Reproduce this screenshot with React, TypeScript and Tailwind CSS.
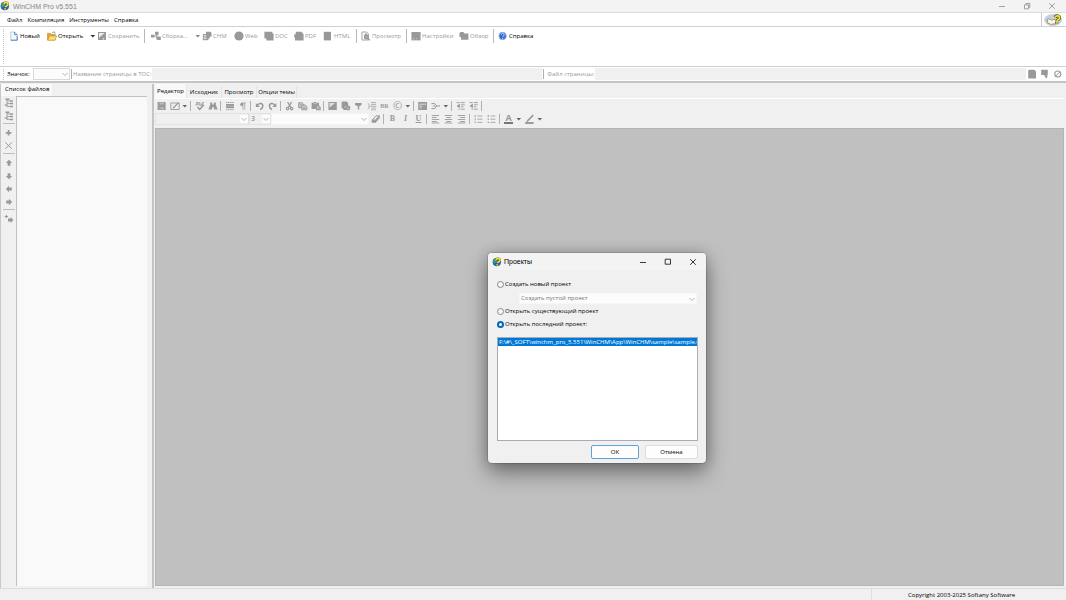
import { useState } from "react";
import type { ReactNode } from "react";
import clsx from "clsx";

type IconProps = { className?: string };

function Svg({ children, className }: { children: ReactNode; className?: string }) {
  return (
    <svg viewBox="0 0 10 10" className={clsx("size-[10px] shrink-0", className)} fill="none" stroke="currentColor" aria-hidden="true">
      {children}
    </svg>
  );
}

const glyphs: Record<string, ReactNode> = {
  save: (
    <g stroke="none">
      <path d="M.6 1h8v8h-8z" fill="currentColor" />
      <path d="M2.6 1.5h4.500v2H2.6zM2.6 6h4v2.400h-4z" fill="#bbb" />
      <path d="M3.400 6.400h1v1.800h-1z" fill="currentColor" />
    </g>
  ),
  saveDiag: (
    <g stroke="none">
      <path d="M1 1h8v8H1z" fill="currentColor" />
      <path d="M2 2h5.600L2 6.800z" fill="#eee" />
      <path d="M5.800 7h1.400v1.600H5.800z" fill="#ddd" />
    </g>
  ),
  edit: (
    <>
      <path d="M.8 2h8.400v6.500H.8z" strokeWidth=".9" />
      <path d="M3 7.300 8.500 1.600" strokeWidth="1.300" />
    </>
  ),
  spell: (
    <>
      <path d="M1 1.500h2.200v3M1 4.500V3h2M4.800 1v3.400h1.600V2.400M9 1.500H7.700v2.800H9" strokeWidth=".9" />
      <path d="M2.500 6 4.700 8.300 8.800 4" strokeWidth="1.500" />
    </>
  ),
  find: (
    <path d="M2.200 1.600h2v2h1.600v-2h2v2l1.800 5H5.900V6.200H4.100v2.400H.4l1.800-5z" fill="currentColor" stroke="none" />
  ),
  pagebreak: (
    <>
      <path d="M1 1.500h8M1 8.700h8" strokeWidth="1" strokeDasharray="1.400 .7" />
      <path d="M1 3h8v4.200H1z" fill="currentColor" stroke="none" />
      <path d="M1 5.100h8" stroke="#ccc" strokeWidth=".6" />
    </>
  ),
  pilcrow: (
    <>
      <path d="M5 2v6.800M6.800 2v6.800M8 2H4" strokeWidth=".7" />
      <path d="M5 1.800H3.800a1.600 1.600 0 0 0 0 3.200H5z" fill="currentColor" stroke="none" />
    </>
  ),
  undo: (
    <>
      <path d="M2.600 4.200C4.600 1.200 8 2.500 7.800 5.200 7.600 7 6.400 8 5.200 8.600" strokeWidth="1.500" />
      <path d="M.9 2v4h4z" fill="currentColor" stroke="none" />
    </>
  ),
  redo: (
    <>
      <path d="M6.600 4.200C4.600 1.200 1.200 2.500 1.400 5.200 1.600 7 2.800 8 4 8.600" strokeWidth="1.500" />
      <path d="M8.300 2v4h-4z" fill="currentColor" stroke="none" />
    </>
  ),
  cut: (
    <>
      <path d="M2.600 1 5.800 6.400M6.600 1 3.400 6.400" strokeWidth="1.300" />
      <circle cx="2.600" cy="7.600" r="1.200" strokeWidth="1.200" />
      <circle cx="6.600" cy="7.600" r="1.200" strokeWidth="1.200" />
    </>
  ),
  copy: (
    <>
      <path d="M.6 1.800h3.500l1.500 1.400v3.600h-5z" fill="#ccc" strokeWidth=".9" />
      <path d="M3.800 4h3.400l1.700 1.600v3.200H3.800z" fill="#ccc" strokeWidth=".9" />
      <path d="M1.600 3.600h2M1.600 5h1.600M4.800 6.200h2.600M4.800 7.500h3" strokeWidth=".6" />
    </>
  ),
  paste: (
    <g stroke="none" fill="currentColor">
      <path d="M.6 1.800h2L3 1h2l.4.800H8V8H.6z" />
      <path d="M5 4.400h3L9.700 6v3.200H5z" />
      <path d="M5.600 5.400h2M5.600 6.600h3M5.600 7.800h3" stroke="#e4e4e4" strokeWidth=".5" />
      <path d="M2.600 2.600h3" stroke="#e4e4e4" strokeWidth=".6" />
    </g>
  ),
  picture: (
    <g stroke="none">
      <path d="M.4 1h8.400v8H.4z" fill="currentColor" />
      <path d="M1.500 2h5.600L1.500 6.600z" fill="#ddd" />
    </g>
  ),
  pictureLink: (
    <g stroke="none" fill="currentColor">
      <path d="M.6.6h5l1.500 1.400v5H.6z" />
      <circle cx="4.200" cy="6.200" r="2.800" />
      <circle cx="7" cy="7" r="2.400" />
      <path d="M3 6h3M6.200 7.400h2" stroke="#ddd" strokeWidth=".6" />
    </g>
  ),
  filter: <path d="M1 2h6.600v2L5.200 5.200v3.200H3.800V5.200L1 4z" fill="currentColor" stroke="none" />,
  hr: (
    <>
      <path d="M4 1.600h5M4 3.400h5M1 5.200h8.400M4 7h5M4 8.800h5" strokeWidth=".7" />
      <path d="M.8 2.400 2.500 4M.8 8 2.500 6.400" strokeWidth=".9" />
    </>
  ),
  form: (
    <g stroke="none">
      <path d="M.2 1H9v8H.2z" fill="currentColor" />
      <path d="M1.200 3.200H8M1.400 5.200h3M1.400 7h2" stroke="#e8e8e8" strokeWidth=".8" />
    </g>
  ),
  split: (
    <>
      <path d="M.4 2.600h3.400M.4 7.600h3.400M4.800 5H9" strokeWidth="1" />
      <path d="M1.800 5h2.400M3.800 2.600 5.400 5 3.800 7.600" strokeWidth=".9" />
    </>
  ),
  outdent: (
    <>
      <path d="M.6 1.600h3M4.800 1.600h4M4.800 3.800h4M4.800 5.800h2.600M4.800 8.200h4" strokeWidth=".9" />
      <path d="M3.800 2.600v4.600L.6 4.900z" fill="currentColor" stroke="none" />
      <path d="M2.400 8.200H4" strokeWidth=".9" />
    </>
  ),
  erase: (
    <>
      <path d="M1 6.200 5 1.800h3.400L4.600 6.200z" fill="#e8e8e8" strokeWidth=".9" />
      <path d="M1 6.200h3.600l3.800-4.400V4L4.600 8.400H1z" fill="currentColor" strokeWidth=".6" />
    </>
  ),
  alignLeft: <path d="M.8 1.500h7.400M.8 3.500h5M.8 5.500h7.400M.8 7.500h5M.8 9h7.400" strokeWidth=".9" />,
  alignCenter: <path d="M.8 1.500h7.400M2.200 3.500h4.600M.8 5.500h7.400M2.200 7.500h4.600M.8 9h7.400" strokeWidth=".9" />,
  alignRight: <path d="M.8 1.500h7.400M3.200 3.500h5M.8 5.500h7.400M3.200 7.500h5M.8 9h7.400" strokeWidth=".9" />,
  numbers: (
    <>
      <path d="M1.200 1v2.400M1.200 4.400v1.800M1.200 7.200v2" strokeWidth=".9" />
      <path d="M3.400 2h5M3.400 5.200h5M3.400 8.400h5" strokeWidth=".8" />
    </>
  ),
  bullets: (
    <>
      <path d="M.6 2H2M.6 5.200H2M.6 8.400H2" strokeWidth="1.300" />
      <path d="M3.400 2h5M3.400 5.200h5M3.400 8.400h5" strokeWidth=".8" />
    </>
  ),
  marker: (
    <>
      <path d="M.2 9h8.400" stroke="#777" strokeWidth="1.400" />
      <path d="M2.400 7 8.200 1.200" strokeWidth="1.700" />
      <path d="M1.400 7.600 3.200 7" strokeWidth="1" />
    </>
  ),
  tree: (
    <>
      <path d="M3 1v8M3 3h3M3 5.600h3M3 8.400h3" strokeWidth=".9" />
      <path d="M1.400 1.200h4M6 3h3M6 5.600h3M6 8.400h3" strokeWidth="1.500" />
      <path d="M.6 7h2.600" strokeWidth="1.200" />
    </>
  ),
  plus: <path d="M4.600 2v5.600M1.800 4.800h5.600" strokeWidth="1.700" />,
  cross: <path d="M1.400 1.400 7.800 7.800M7.800 1.400 1.400 7.800" strokeWidth="1" />,
  arrow: <path d="M5 1.800 8.200 5H6.400v2.800H3.600V5H1.800z" fill="currentColor" stroke="none" />,
  move: (
    <g fill="currentColor" stroke="none">
      <path d="M9.400 6 6.600 3v1.600H4v2.800h2.600V9z" />
      <path d="M2.400.8v3.400M.7 2.500h3.400" stroke="currentColor" strokeWidth="1" />
    </g>
  ),
  build: (
    <g fill="currentColor" stroke="none">
      <path d="M4 .8h3.600v3H4zM6.200 5.600h3.600v3.400H6.200zM0 3.800h3.400v2.600H0z" />
      <path d="M2 5h3.800v2.600h2M5.800 3v2.600" fill="none" stroke="currentColor" strokeWidth="1.200" />
    </g>
  ),
  chm: (
    <g stroke="none">
      <path d="M.8 3h5.600v6.200H.8z" fill="currentColor" />
      <path d="M1.600 4.400h3M1.600 6h3M1.600 7.600h3" stroke="#fff" strokeWidth=".7" />
      <path d="M4 .8h4.400L9.600 2v3.400H7.800v2H6V5H4z" fill="currentColor" />
    </g>
  ),
  web: <circle cx="5" cy="5" r="4.600" fill="currentColor" stroke="none" />,
  doc: <path d="M.4.800h8v1.600h1.200v7H2.400V7.600h-2z" fill="currentColor" stroke="none" />,
  pdf: <path d="M1.800.800h5.600l2.200 2.400v6.200H1V6.600H.2V3.200h1.600z" fill="currentColor" stroke="none" />,
  html: <path d="M.8.800h7.200v8.600H.8z" fill="currentColor" stroke="none" />,
  preview: (
    <>
      <path d="M1 1h4.600L7.400 3v6H1z" fill="#fff" strokeWidth=".9" />
      <path d="M4 2.600h1.600L6.800 5H3.200z" fill="currentColor" stroke="none" />
      <circle cx="5.400" cy="6" r="1.900" fill="#aaa" strokeWidth="1.200" />
      <path d="m6.600 7.200 2.200 2" strokeWidth="1.400" />
    </>
  ),
  settings: (
    <g stroke="none">
      <path d="M.4 1h9.200v8.400H.4z" fill="currentColor" />
      <path d="M1.600 7.800h2M5 7.800h1" stroke="#ddd" strokeWidth=".6" />
    </g>
  ),
  browse: <path d="M.4 2.400 1.400 1h3l1 1.400h4v6.400H2V6H.4z" fill="currentColor" stroke="none" />,
  pageAdd: <path d="M2 .800h5.400L9 2.400v7H1.200V1.600z" fill="currentColor" stroke="none" />,
  pagePick: <path d="M1.200.800h6.600v5.400L6.600 6.800l1.200 1.200L6 9.600 5.200 7.800 4.400 7V6H1.200z" fill="currentColor" stroke="none" />,
  none: (
    <>
      <circle cx="4.800" cy="5" r="3" strokeWidth="1.100" />
      <path d="M2.800 7 6.800 3" strokeWidth="1" />
    </>
  ),
  newPage: (
    <>
      <path d="M1.800 1h4l2.400 2.400v5.800H1.800z" fill="#f4f9ff" stroke="#a3bad6" strokeWidth=".7" />
      <path d="M5.600 1v2.600h2.600" stroke="#3d78bd" strokeWidth=".9" />
      <path d="M1.800 9.200h6.400V5" stroke="#4273ad" strokeWidth=".8" />
    </>
  ),
  open: (
    <>
      <path d="M.6 9V2.400h3l1 1.200h3.600V9z" fill="#e9a92c" stroke="#b57a12" strokeWidth=".6" />
      <path d="M2.400 5h7.300L8 9.200H.7z" fill="#ffdd78" stroke="#c68b1c" strokeWidth=".6" />
      <path d="M5.400 1.600c1.400-1 2.600-.6 3 .8" stroke="#3d78bd" strokeWidth=".9" />
    </>
  ),
  help: (
    <>
      <circle cx="4.600" cy="5" r="3.700" fill="#3769d2" stroke="#93b2ec" strokeWidth=".9" />
      <path d="M3.200 4c0-2 3-2 3 0C6.200 5.200 4.600 5 4.600 6.200M4.600 7v1" stroke="#e6eeff" strokeWidth=".8" />
    </>
  ),
  logo: (
    <>
      <circle cx="4.800" cy="5" r="4" fill="#1d65c0" stroke="#2a569b" strokeWidth=".5" />
      <path d="M1 4.400C1.400 2 3.200.9 5.200 1L4.600 4.600 2.200 6.600z" fill="#4aa35c" stroke="none" />
      <path d="M4 3.200C4.200.9 8.400 1 7.800 3.600 7.400 5 5.600 4.800 5.400 6.200M5.200 7.200v1.300" stroke="#6a6820" strokeWidth="2.200" />
      <path d="M4 3.200C4.200.9 8.400 1 7.800 3.600 7.400 5 5.600 4.800 5.400 6.200M5.200 7.200v1.300" stroke="#f2e23c" strokeWidth="1.600" />
    </>
  ),
};

function Icon({ name, className }: IconProps & { name: string }) {
  return <Svg className={className}>{glyphs[name]}</Svg>;
}

function Caret({ className }: IconProps) {
  return (
    <svg viewBox="0 0 8 10" className={clsx("h-[10px] w-2 shrink-0", className)} aria-hidden="true">
      <path d="M1.500 4h4.600L3.800 6.600z" fill="currentColor" />
    </svg>
  );
}

function ToolButton({ icon, label, width, enabled, text }: { icon: string; label?: string; width: string; enabled?: boolean; text?: string }) {
  return (
    <button
      type="button"
      aria-label={label}
      disabled={!enabled}
      className={clsx("flex h-[14px] shrink-0 items-center gap-px whitespace-nowrap", width, enabled ? "text-black" : "text-[#999]")}
    >
      <Icon name={icon} />
      {text}
    </button>
  );
}

function BarSeparator({ width }: { width: string }) {
  return <div className={clsx("h-[14px] shrink-0 border-l border-[#b8b8b8]", width)} />;
}

function DropButton({ label, className }: { label: string; className?: string }) {
  return (
    <button type="button" aria-label={label} className={clsx("flex w-2 shrink-0 items-center", className)}>
      <Caret />
    </button>
  );
}

function MainToolbar() {
  return (
    <div role="toolbar" aria-label="Главная" className="flex h-[40px] items-start border-b border-[#cfcfcf] bg-white pt-[2px] pl-[3px]">
      <div className="h-[35px] w-[6px] shrink-0 border-l border-dotted border-[#c4c4c4]" />
      <ToolButton icon="newPage" text="Новый" width="w-[38px]" enabled />
      <ToolButton icon="open" text="Открыть" width="w-[42px]" enabled />
      <DropButton label="Недавние" className="h-[14px] text-[#333]" />
      <ToolButton icon="saveDiag" text="Сохранить" width="w-[47px]" />
      <BarSeparator width="w-[7px]" />
      <ToolButton icon="build" text="Сборка..." width="w-[43px]" />
      <DropButton label="Варианты сборки" className="h-[14px] text-[#888]" />
      <ToolButton icon="chm" text="CHM" width="w-[32px]" />
      <ToolButton icon="web" text="Web" width="w-[30px]" />
      <ToolButton icon="doc" text="DOC" width="w-[30px]" />
      <ToolButton icon="pdf" text="PDF" width="w-[29px]" />
      <ToolButton icon="html" text="HTML" width="w-[33px]" />
      <BarSeparator width="w-[5px]" />
      <ToolButton icon="preview" text="Просмотр" width="w-[45px]" />
      <BarSeparator width="w-[5px]" />
      <ToolButton icon="settings" text="Настройки" width="w-[48px]" />
      <ToolButton icon="browse" text="Обзор" width="w-[34px]" />
      <BarSeparator width="w-[5px]" />
      <ToolButton icon="help" text="Справка" width="w-[40px]" enabled />
    </div>
  );
}

function Combo({ label, value, className, fill }: { label: string; value?: string; className?: string; fill?: string }) {
  return (
    <div className={clsx("relative shrink-0 border bg-[#fcfcfc]", className)}>
      <select aria-label={label} disabled className={clsx("block h-full w-full appearance-none pl-px text-[#777] opacity-100", fill)}>
        <option>{value}</option>
      </select>
      <svg viewBox="0 0 8 8" className="pointer-events-none absolute top-1/2 right-0 size-2 -translate-y-1/2 bg-[#fcfcfc]" fill="none" stroke="#aaa" aria-hidden="true">
        <path d="M1.500 3 4 5.500 6.500 3" strokeWidth=".9" />
      </svg>
    </div>
  );
}

function PageBar() {
  return (
    <div className="flex h-[14px] shrink-0 items-center bg-white pr-[3px] pl-[3px]">
      <div className="h-[11px] w-1 shrink-0 border-l border-dotted border-[#c4c4c4]" />
      <span className="w-[26px] shrink-0 text-black">Значок:</span>
      <Combo label="Значок" className="h-3 w-[37px] border-[#d9d9d9]" />
      <div className="ml-px h-[10px] w-[2px] shrink-0 border-l border-[#b0b0b0]" />
      <label htmlFor="page-title" className="shrink-0 whitespace-nowrap text-[#999]">
        Название страницы в TOC:
      </label>
      <input id="page-title" disabled className="h-3 min-w-0 flex-[390] bg-[#f0f0f0]" />
      <div className="ml-px h-[10px] w-1 shrink-0 border-l border-[#b0b0b0]" />
      <label htmlFor="page-file" className="w-12 shrink-0 whitespace-nowrap text-[#999]">
        Файл страницы:
      </label>
      <input id="page-file" disabled className="h-3 min-w-0 flex-[430] bg-[#f0f0f0]" />
      <div className="flex shrink-0 gap-[3px] pl-px text-[#999]">
        <button type="button" aria-label="Создать файл"><Icon name="pageAdd" className="block" /></button>
        <button type="button" aria-label="Выбрать файл"><Icon name="pagePick" className="block" /></button>
        <button type="button" aria-label="Очистить"><Icon name="none" className="block" /></button>
      </div>
    </div>
  );
}

const sideTools = [
  ["tree", "Развернуть"],
  ["tree", "Свернуть"],
  null,
  ["plus", "Добавить"],
  ["cross", "Удалить"],
  null,
  ["arrow", "Вверх"],
  ["arrow", "Вниз", "rotate-180"],
  ["arrow", "Влево", "-rotate-90"],
  ["arrow", "Вправо", "rotate-90"],
  null,
  ["move", "Переместить"],
];

function FilePanel() {
  return (
    <aside className="flex w-[152px] shrink-0 flex-col border-l border-[#c8c8c8] pb-[2px]">
      <div className="flex h-3">
        <div className="w-[51px] bg-[#f9f9f9] pl-1 leading-[10px] whitespace-nowrap text-black">Список файлов</div>
      </div>
      <div className="flex min-h-0 flex-1">
        <div className="flex w-[15px] shrink-0 flex-col items-center text-[#999]">
          {sideTools.map((tool, index) =>
            tool ? (
              <button key={index} type="button" disabled aria-label={tool[1]} className="flex h-[13px] w-[13px] items-center justify-center">
                <Icon name={tool[0]} className={tool[2]} />
              </button>
            ) : (
              <div key={index} className="mt-px mb-[2px] h-px w-3 shrink-0 bg-[#bdbdbd]" />
            )
          )}
        </div>
        <div className="mr-[5px] flex-1 border-t border-l border-[#c0c0c0] bg-[#f9f9f9]" />
      </div>
    </aside>
  );
}

function IconButton({ name, label, className }: { name: string; label: string; className?: string }) {
  return (
    <button type="button" disabled aria-label={label} className="flex h-[13px] w-[13px] shrink-0 items-center justify-center">
      <Icon name={name} className={className} />
    </button>
  );
}

function LetterButton({ text, label, className }: { text: string; label: string; className?: string }) {
  return (
    <button type="button" disabled aria-label={label} className={clsx("flex h-[13px] w-[13px] shrink-0 items-center justify-center leading-none", className)}>
      {text}
    </button>
  );
}

function Divider() {
  return (
    <div className="flex w-1 shrink-0 pl-px">
      <div className="h-[10px] w-px bg-[#b0b0b0]" />
    </div>
  );
}

function EditorToolbars() {
  return (
    <div className="h-[30px] border-t border-white text-[#999]">
      <div role="toolbar" aria-label="Правка" className="flex h-[13px] items-center">
        <IconButton name="save" label="Сохранить" />
        <IconButton name="edit" label="Правка" />
        <DropButton label="Ещё" className="text-[#666]" />
        <Divider />
        <IconButton name="spell" label="Орфография" />
        <IconButton name="find" label="Найти" />
        <Divider />
        <IconButton name="pagebreak" label="Границы" />
        <IconButton name="pilcrow" label="Абзацы" />
        <Divider />
        <IconButton name="undo" label="Отменить" />
        <IconButton name="redo" label="Вернуть" />
        <Divider />
        <IconButton name="cut" label="Вырезать" />
        <IconButton name="copy" label="Копировать" />
        <IconButton name="paste" label="Вставить" />
        <Divider />
        <IconButton name="picture" label="Рисунок" />
        <IconButton name="pictureLink" label="Ссылка" />
        <IconButton name="filter" label="Закладка" />
        <IconButton name="hr" label="Линия" />
        <LetterButton text="BR" label="Перенос" className="font-['Liberation_Serif',serif] font-bold" />
        <LetterButton text="©" label="Символ" className="text-[11px]" />
        <DropButton label="Символы" className="text-[#666]" />
        <Divider />
        <IconButton name="form" label="Таблица" />
        <IconButton name="split" label="Ячейки" />
        <DropButton label="Команды таблицы" className="text-[#666]" />
        <Divider />
        <IconButton name="outdent" label="Уменьшить отступ" />
        <IconButton name="outdent" label="Увеличить отступ" />
        <Divider />
      </div>
      <div role="toolbar" aria-label="Формат" className="flex h-[13px] items-center">
        <Combo label="Стиль" className="h-3 w-[94px] border-[#e2e2e2]" fill="bg-[#f0f0f0]" />
        <Combo label="Размер" value="3" className="h-3 w-[22px] border-[#e2e2e2] text-[7px]" fill="bg-[#f0f0f0]" />
        <Combo label="Шрифт" className="h-3 w-[98px] border-[#f4f4f4]" />
        <IconButton name="erase" label="Очистить формат" />
        <Divider />
        <LetterButton text="B" label="Полужирный" className="font-['Liberation_Serif',serif] text-[8px] font-bold" />
        <LetterButton text="I" label="Курсив" className="font-['Liberation_Serif',serif] text-[8px] font-bold italic" />
        <LetterButton text="U" label="Подчёркнутый" className="font-['Liberation_Serif',serif] text-[8px] font-bold underline" />
        <Divider />
        <IconButton name="alignLeft" label="По левому краю" />
        <IconButton name="alignCenter" label="По центру" />
        <IconButton name="alignRight" label="По правому краю" />
        <Divider />
        <IconButton name="numbers" label="Нумерация" />
        <IconButton name="bullets" label="Маркеры" />
        <Divider />
        <button type="button" disabled aria-label="Цвет текста" className="flex h-[13px] w-[13px] shrink-0 items-center justify-center">
          <span className="block h-[10px] w-[9px] border-b-2 border-[#777] text-[9px] leading-[8px] font-bold">A</span>
        </button>
        <DropButton label="Выбрать цвет текста" className="text-[#666]" />
        <IconButton name="marker" label="Цвет фона" />
        <DropButton label="Выбрать цвет фона" className="text-[#666]" />
      </div>
    </div>
  );
}

const tabs = [
  { title: "Редактор", width: "w-[32px]" },
  { title: "Исходник", width: "w-[35px]" },
  { title: "Просмотр", width: "w-[35px]" },
  { title: "Опции темы", width: "w-[40px]" },
];

function EditorPanel() {
  const [active, setActive] = useState(0);

  return (
    <main className="flex min-w-0 flex-1 flex-col border-l-2 border-[#c4c4c4] pr-[2px] pb-[2px] pl-px">
      <div role="tablist" className="flex h-[14px] items-end">
        {tabs.map((tab, index) => (
          <button
            key={tab.title}
            type="button"
            role="tab"
            aria-selected={index === active}
            onClick={() => setActive(index)}
            className={clsx(
              "border-r border-[#e4e4e4] text-center whitespace-nowrap text-black",
              tab.width,
              index === active ? "h-[14px] bg-[#f9f9f9]" : "h-3"
            )}
          >
            {tab.title}
          </button>
        ))}
      </div>
      <EditorToolbars />
      <div className="flex-1 border border-[#b4b4b4] bg-[#c0c0c0]" />
    </main>
  );
}

const modes = [
  { id: "new", label: "Создать новый проект" },
  { id: "existing", label: "Открыть существующий проект" },
  { id: "recent", label: "Открыть последний проект:" },
];

function ProjectsDialog() {
  const [mode, setMode] = useState("recent");

  return (
    <div
      role="dialog"
      aria-label="Проекты"
      className="absolute top-[253px] left-[488px] flex h-[210px] w-[218px] flex-col overflow-hidden rounded-[4px] bg-[#f0f0f0] text-black shadow-[0_0_0_1px_rgba(0,0,0,0.12),0_0_14px_rgba(0,0,0,0.2),0_10px_22px_rgba(0,0,0,0.4)]"
    >
      <div className="flex h-[17px] shrink-0 items-center bg-[#f3f3f3] pr-px pl-1 font-['Liberation_Sans',sans-serif] text-[7px]">
        <Icon name="logo" />
        <span className="ml-[2px] flex-1">Проекты</span>
        <WindowButtons icon="max" className="text-[#222]" />
      </div>
      <div className="flex flex-1 flex-col pt-2 pr-2 pb-1 pl-[9px]">
        {modes.map((item) => (
          <div key={item.id}>
            <label className="flex h-[13px] items-center gap-px whitespace-nowrap">
              <input
                type="radio"
                name="mode"
                checked={mode === item.id}
                onChange={() => setMode(item.id)}
                className="size-[7px] shrink-0 appearance-none rounded-full border border-[#888] bg-[#f6f6f6] checked:border-2 checked:border-[#0067c0] checked:bg-white"
              />
              {item.label}
            </label>
            {item.id === "new" && (
              <Combo label="Шаблон" value="Создать пустой проект" className="mt-[2px] mr-px mb-px ml-[22px] h-[11px] border-[#f6f6f6]" />
            )}
          </div>
        ))}
        <ul role="listbox" aria-label="Последние проекты" className="mt-[6px] flex-1 overflow-hidden border border-[#a9adb3] bg-white">
          <li role="option" aria-selected="true" className="h-2 overflow-hidden bg-[#0078d7] pl-px leading-[8px] whitespace-nowrap text-white">
            F:\#\_SOFT\winchm_pro_5.551\WinCHM\App\WinCHM\sample\sample.w
          </li>
        </ul>
        <div className="mt-1 flex justify-end gap-[6px]">
          <button type="button" className="h-[14px] w-12 rounded-[2px] border border-[#5ba3dd] bg-[#fdfdfd]">OK</button>
          <button type="button" className="h-[14px] w-[53px] rounded-[2px] border border-[#dcdcdc] bg-[#fdfdfd]">Отмена</button>
        </div>
      </div>
    </div>
  );
}

function WindowButtons({ icon, className }: { icon: "max" | "restore"; className: string }) {
  return (
    <div className={clsx("flex", className)}>
      <button type="button" aria-label="Свернуть" className="flex w-[25px] justify-center">
        <Svg><path d="M2 5.500h6" strokeWidth=".9" /></Svg>
      </button>
      <button type="button" aria-label="Развернуть" className="flex w-[25px] justify-center">
        <Svg>
          {icon === "max" ? (
            <path d="M2.200 2.200h5.300v5H2.200z" strokeWidth=".9" />
          ) : (
            <path d="M2.500 3.800h4v4h-4zM4 3.600V2.400h3.800v4H6.600" strokeWidth=".9" />
          )}
        </Svg>
      </button>
      <button type="button" aria-label="Закрыть" className="flex w-[25px] justify-center">
        <Svg><path d="m2.200 2.200 5.600 5.600M7.800 2.200 2.200 7.800" strokeWidth=".9" /></Svg>
      </button>
    </div>
  );
}

export default function App() {
  return (
    <div className="relative flex h-screen flex-col overflow-hidden bg-[#f0f0f0] font-['Open_Sans','Noto_Sans',sans-serif] text-[6px] leading-[9px]">
      <header className="flex h-[13px] shrink-0 items-center border-b border-[#dcdcdc] bg-[#f3f3f3] pr-[2px] font-['Liberation_Sans',sans-serif] text-[7px] text-[#888]">
        <Icon name="logo" />
        <span className="ml-[3px] flex-1">WinCHM Pro v5.551</span>
        <WindowButtons icon="restore" className="text-[#999]" />
      </header>
      <div className="flex h-[14px] shrink-0 items-center border-b border-[#cfcfcf] bg-white pl-[7px] text-black">
        <nav className="flex flex-1 gap-[5px] pt-px">
          <a href="#file">Файл</a>
          <a href="#build">Компиляция</a>
          <a href="#tools">Инструменты</a>
          <a href="#help">Справка</a>
        </nav>
        <div className="flex h-full w-[25px] items-center justify-center border-l border-[#c8c8c8]">
          <svg viewBox="0 0 20 12" className="h-3 w-5" aria-hidden="true">
            <ellipse cx="9" cy="6" rx="9" ry="6" fill="#c3d1e6" />
            <path d="M3 5.500c2-1 3.500-.4 4.500.8 1.400-1 2.900-1 4.500-.2l-1 4.200c-1.800-.7-2.500-.5-3.900.4C5.900 9.600 5.200 9.400 4 9.600z" fill="#fff5df" stroke="#8a6e4c" strokeWidth=".7" />
            <path d="M11 3.400c1-2.400 5-1.800 4.500.8-.4 1.400-2.200 1.400-2.400 2.800M12.800 8.200v1.300" fill="none" stroke="#3a3708" strokeWidth="3" />
            <path d="M11 3.400c1-2.400 5-1.800 4.500.8-.4 1.400-2.200 1.400-2.400 2.800M12.800 8.200v1.300" fill="none" stroke="#f4ea20" strokeWidth="1.900" />
          </svg>
        </div>
      </div>
      <MainToolbar />
      <PageBar />
      <div className="flex min-h-0 flex-1 border-t-2 border-[#c4c4c4] pt-px">
        <FilePanel />
        <EditorPanel />
      </div>
      <footer className="flex h-3 shrink-0 items-center border-t border-[#dedede] text-black">
        <div className="flex-1" />
        <div className="h-full w-[195px] border-l border-[#dedede] pl-[36px] leading-[12px]">Copyright 2003-2025 Softany Software</div>
      </footer>
      <ProjectsDialog />
    </div>
  );
}
